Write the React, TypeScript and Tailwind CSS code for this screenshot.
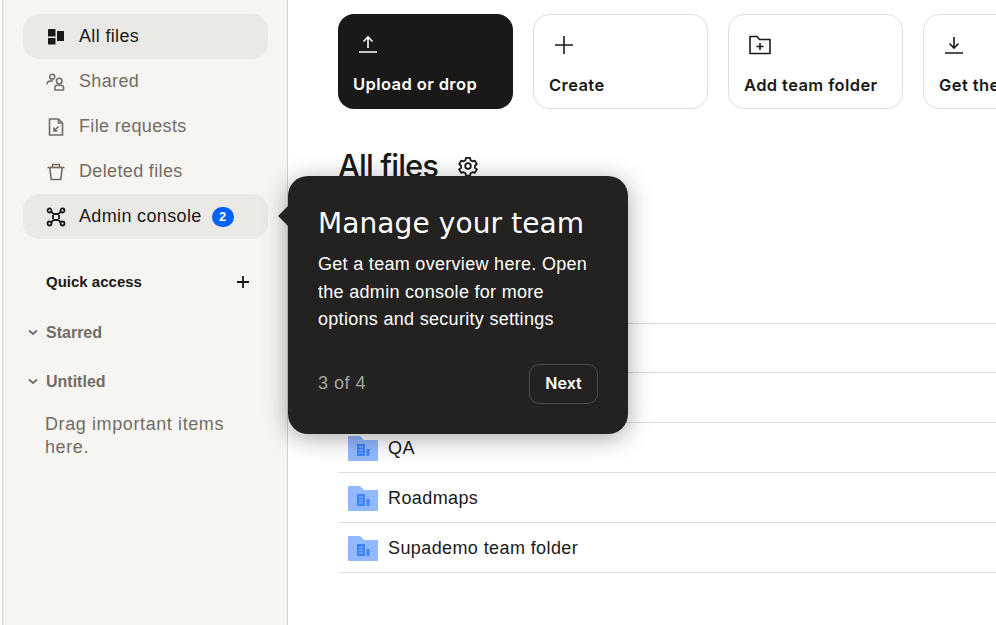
import { ReactNode } from 'react';

// sidebar icons are drawn by hand, the icon packages have no close match
const AllFilesIcon = () => (
  <svg width="20" height="20" viewBox="0 0 20 20" fill="#1a1918">
    <rect x="2" y="2" width="7.500" height="7.500" rx="0.500" />
    <rect x="2" y="11" width="7.500" height="6.500" rx="0.500" />
    <rect x="11" y="4" width="7" height="10" rx="0.500" />
  </svg>
);

const SharedIcon = () => (
  <svg width="20" height="20" viewBox="0 0 20 20" fill="none" stroke="#736c64" strokeWidth="1.500">
    <circle cx="6.200" cy="4.800" r="2.500" />
    <path d="M1 12.500c0-2.200 1.600-3.500 3.500-3.500h2.500" />
    <circle cx="13.200" cy="9" r="2.800" />
    <path d="M9 18v-2.500c0-1.200 1-2.200 2.300-2.200h3.900c1.300 0 2.300 1 2.300 2.200V18z" />
  </svg>
);

const FileRequestIcon = () => (
  <svg width="20" height="20" viewBox="0 0 20 20" fill="none" stroke="#736c64" strokeWidth="1.600">
    <path d="M3.500 2h9l4 4v12h-13z" />
    <path d="M12.500 2v4h4" />
    <path d="M12.500 9.500L8 14M8 10.500V14h3.500" />
  </svg>
);

const TrashIcon = () => (
  <svg width="20" height="20" viewBox="0 0 20 20" fill="none" stroke="#736c64" strokeWidth="1.600">
    <path d="M1.500 5.500h17" />
    <path d="M6.500 5.500V2.500h7v3" />
    <path d="M3.800 5.500l1.400 12h9.600l1.400-12" />
  </svg>
);

const AdminIcon = () => (
  <svg width="20" height="20" viewBox="0 0 20 20" fill="none" stroke="#1a1918" strokeWidth="1.800">
    <circle cx="3.500" cy="3.500" r="2" />
    <circle cx="16.500" cy="3.500" r="2" />
    <circle cx="3.500" cy="16.500" r="2" />
    <circle cx="16.500" cy="16.500" r="2" />
    <path d="M5.500 4.800c1 1.500 1.800 2.200 2.500 2.200h4c.700 0 1.500-.700 2.500-2.200M5.500 15.200c1-1.500 1.800-2.200 2.500-2.200h4c.700 0 1.500.700 2.500 2.200M7 8v4M13 8v4" />
  </svg>
);

const Chevron = () => (
  <svg width="10" height="10" viewBox="0 0 10 10" fill="none" stroke="#736c64" strokeWidth="1.800">
    <path d="M1 2.500l4 3.500 4-3.500" />
  </svg>
);

const SmallPlus = () => (
  <svg width="14" height="14" viewBox="0 0 14 14" fill="none" stroke="#1a1918" strokeWidth="1.800">
    <path d="M7 1v12M1 7h12" />
  </svg>
);

const UploadIcon = () => (
  <svg width="20" height="20" viewBox="0 0 20 20" fill="none" stroke="#fff" strokeWidth="1.600">
    <path d="M10 14V3M5.500 7.500L10 3l4.500 4.500M1 18h18" />
  </svg>
);

const PlusIcon = () => (
  <svg width="20" height="20" viewBox="0 0 20 20" fill="none" stroke="#1a1918" strokeWidth="1.600">
    <path d="M10 1v18M1 10h18" />
  </svg>
);

const FolderPlusIcon = () => (
  <svg width="22" height="20" viewBox="0 0 22 20" fill="none" stroke="#1a1918" strokeWidth="1.600">
    <path d="M1 1.500h7l2.500 3H21v14H1z" strokeLinejoin="round" />
    <path d="M11 8v7M7.500 11.500h7" />
  </svg>
);

const DownloadIcon = () => (
  <svg width="20" height="20" viewBox="0 0 20 20" fill="none" stroke="#1a1918" strokeWidth="1.600">
    <path d="M10 2v11M5.500 8.500L10 13l4.500-4.500M1 18h18" />
  </svg>
);

const GearIcon = () => (
  <svg width="20" height="20" viewBox="0 0 20 20" fill="none" stroke="#1a1918" strokeWidth="1.800">
    <path d="M8 1.800h4l.6 2.500 1.700 1 2.500-.700 2 3.400-1.900 1.800v1.900l1.900 1.800-2 3.400-2.500-.700-1.700 1-.6 2.500H8l-.6-2.500-1.700-1-2.500.700-2-3.400 1.900-1.800v-1.900L1.200 8l2-3.400 2.500.700 1.700-1z" strokeLinejoin="round" />
    <circle cx="10" cy="10" r="2.800" />
  </svg>
);

const TeamFolderIcon = () => (
  <svg width="30" height="25" viewBox="0 0 30 25">
    <path d="M0 1a1 1 0 0 1 1-1h11l4 4h14v20a1 1 0 0 1-1 1H1a1 1 0 0 1-1-1z" fill="#92b9fe" />
    <rect x="9" y="8" width="8" height="12" fill="#3d84f7" />
    <path d="M11 11h4M11 14h4M11 17h4" stroke="#92b9fe" strokeWidth="1" />
    <rect x="18.500" y="13" width="3" height="7" fill="#3d84f7" />
  </svg>
);

function NavItem({
  icon,
  label,
  active,
  children,
}: {
  icon: ReactNode;
  label: string;
  active?: boolean;
  children?: ReactNode;
}) {
  return (
    <div className={`flex h-[45px] items-center rounded-2xl pl-[23px] ${active ? 'bg-[#ebe9e5]' : ''}`}>
      <span className="flex w-[33px] shrink-0">{icon}</span>
      <span className={`pb-px text-[18px] tracking-[0.350px] ${active ? 'text-[#1a1918]' : 'text-[#736c64]'}`}>
        {label}
      </span>
      {children}
    </div>
  );
}

function ActionTile({ icon, label, dark }: { icon: ReactNode; label: string; dark?: boolean }) {
  return (
    <div
      className={`flex h-[95px] w-[175px] shrink-0 flex-col rounded-2xl pt-[19px] pl-[15px] font-['Inter',sans-serif] ${
        dark ? 'bg-[#1a1918] text-white' : 'border border-[#e0dedb] text-[#1a1918]'
      }`}
    >
      <span className="ml-[5px] flex h-[21px] items-center">{icon}</span>
      <span className="mt-[18px] text-[16.500px] font-semibold tracking-[0.400px] whitespace-nowrap">{label}</span>
    </div>
  );
}

function FolderRow({ name }: { name?: string }) {
  return (
    <div className="ml-px flex h-[50px] items-center gap-[10px] border-b border-[#dedcd9] pt-[2px] pl-[9px] text-[18px] tracking-[0.400px] text-[#1a1918]">
      <TeamFolderIcon />
      <span>{name}</span>
    </div>
  );
}

export default function App() {
  return (
    <div className="relative flex h-[625px] w-[996px] overflow-hidden bg-white font-['Liberation_Sans',sans-serif]">
      <aside className="ml-[2px] h-full w-[286px] shrink-0 border-x border-[#d4d2ce] bg-[#f7f5f2] pt-[14px] pr-[19px] pl-[20px]">
        <NavItem icon={<AllFilesIcon />} label="All files" active />
        <NavItem icon={<SharedIcon />} label="Shared" />
        <NavItem icon={<FileRequestIcon />} label="File requests" />
        <NavItem icon={<TrashIcon />} label="Deleted files" />
        <NavItem icon={<AdminIcon />} label="Admin console" active>
          <span className="ml-[10px] flex h-[20px] w-[22px] items-center justify-center rounded-full bg-[#0061fe] text-[13px] font-semibold text-white">
            2
          </span>
        </NavItem>

        <div className="mt-[32px] flex items-center justify-between pr-[18px] pl-[23px]">
          <span className="text-[15px] font-bold text-[#1a1918]">Quick access</span>
          <SmallPlus />
        </div>
        <div className="mt-[27px] flex items-center gap-[8px] pl-[5px]">
          <Chevron />
          <span className="text-[16px] font-bold text-[#736c64]">Starred</span>
        </div>
        <div className="mt-[25px] flex items-center gap-[8px] pl-[5px]">
          <Chevron />
          <span className="text-[16px] font-bold text-[#736c64]">Untitled</span>
        </div>
        <p className="mt-[19px] pl-[22px] text-[18px] leading-[23px] tracking-[0.600px] text-[#736c64]">
          Drag important items
          <br />
          here.
        </p>
      </aside>

      <main className="min-w-0 flex-1 pt-[14px] pl-[50px]">
        <div className="flex gap-[20px]">
          <ActionTile icon={<UploadIcon />} label="Upload or drop" dark />
          <ActionTile icon={<PlusIcon />} label="Create" />
          <ActionTile icon={<FolderPlusIcon />} label="Add team folder" />
          <ActionTile icon={<DownloadIcon />} label="Get the app" />
        </div>
        <div className="mt-[37px] flex items-center gap-[20px]">
          <h1 className="font-['Inter',sans-serif] text-[31px] leading-[40px] font-medium tracking-[-0.900px] text-[#1a1918]">
            All files
          </h1>
          <GearIcon />
        </div>
        <div className="mt-[88px] h-[50px] border-b border-[#dedcd9]" />
        <div className="-mt-px">
          <FolderRow />
        </div>
        <FolderRow />
        <FolderRow name="QA" />
        <FolderRow name="Roadmaps" />
        <FolderRow name="Supademo team folder" />
      </main>

      {/* onboarding popover over the page */}
      <div className="absolute top-[176px] left-[288px] flex h-[258px] w-[340px] flex-col rounded-[20px] bg-[#242220] px-[30px] pt-[29px] text-white shadow-[0_4px_24px_rgba(0,0,0,0.35)]">
        <span className="absolute top-[33px] left-[-7px] size-[14px] rotate-45 bg-[#242220]" />
        <h2 className="font-['DejaVu_Sans',sans-serif] text-[28px] leading-[38px] font-normal tracking-[0.100px] whitespace-nowrap">
          Manage your team
        </h2>
        <p className="mt-[8px] text-[18px] leading-[27.500px] tracking-[0.300px] whitespace-nowrap">
          Get a team overview here. Open
          <br />
          the admin console for more
          <br />
          options and security settings
        </p>
        <div className="mt-auto mb-[30px] flex items-center justify-between">
          <span className="pb-[2px] text-[18px] tracking-[0.500px] text-[#a8a4a0]">3 of 4</span>
          <button
            type="button"
            className="flex h-[40px] w-[69px] items-center justify-center rounded-[10px] border border-[#4e4c4a] pb-[2px] font-['Inter',sans-serif] text-[16px] font-semibold"
          >
            Next
          </button>
        </div>
      </div>
    </div>
  );
}
